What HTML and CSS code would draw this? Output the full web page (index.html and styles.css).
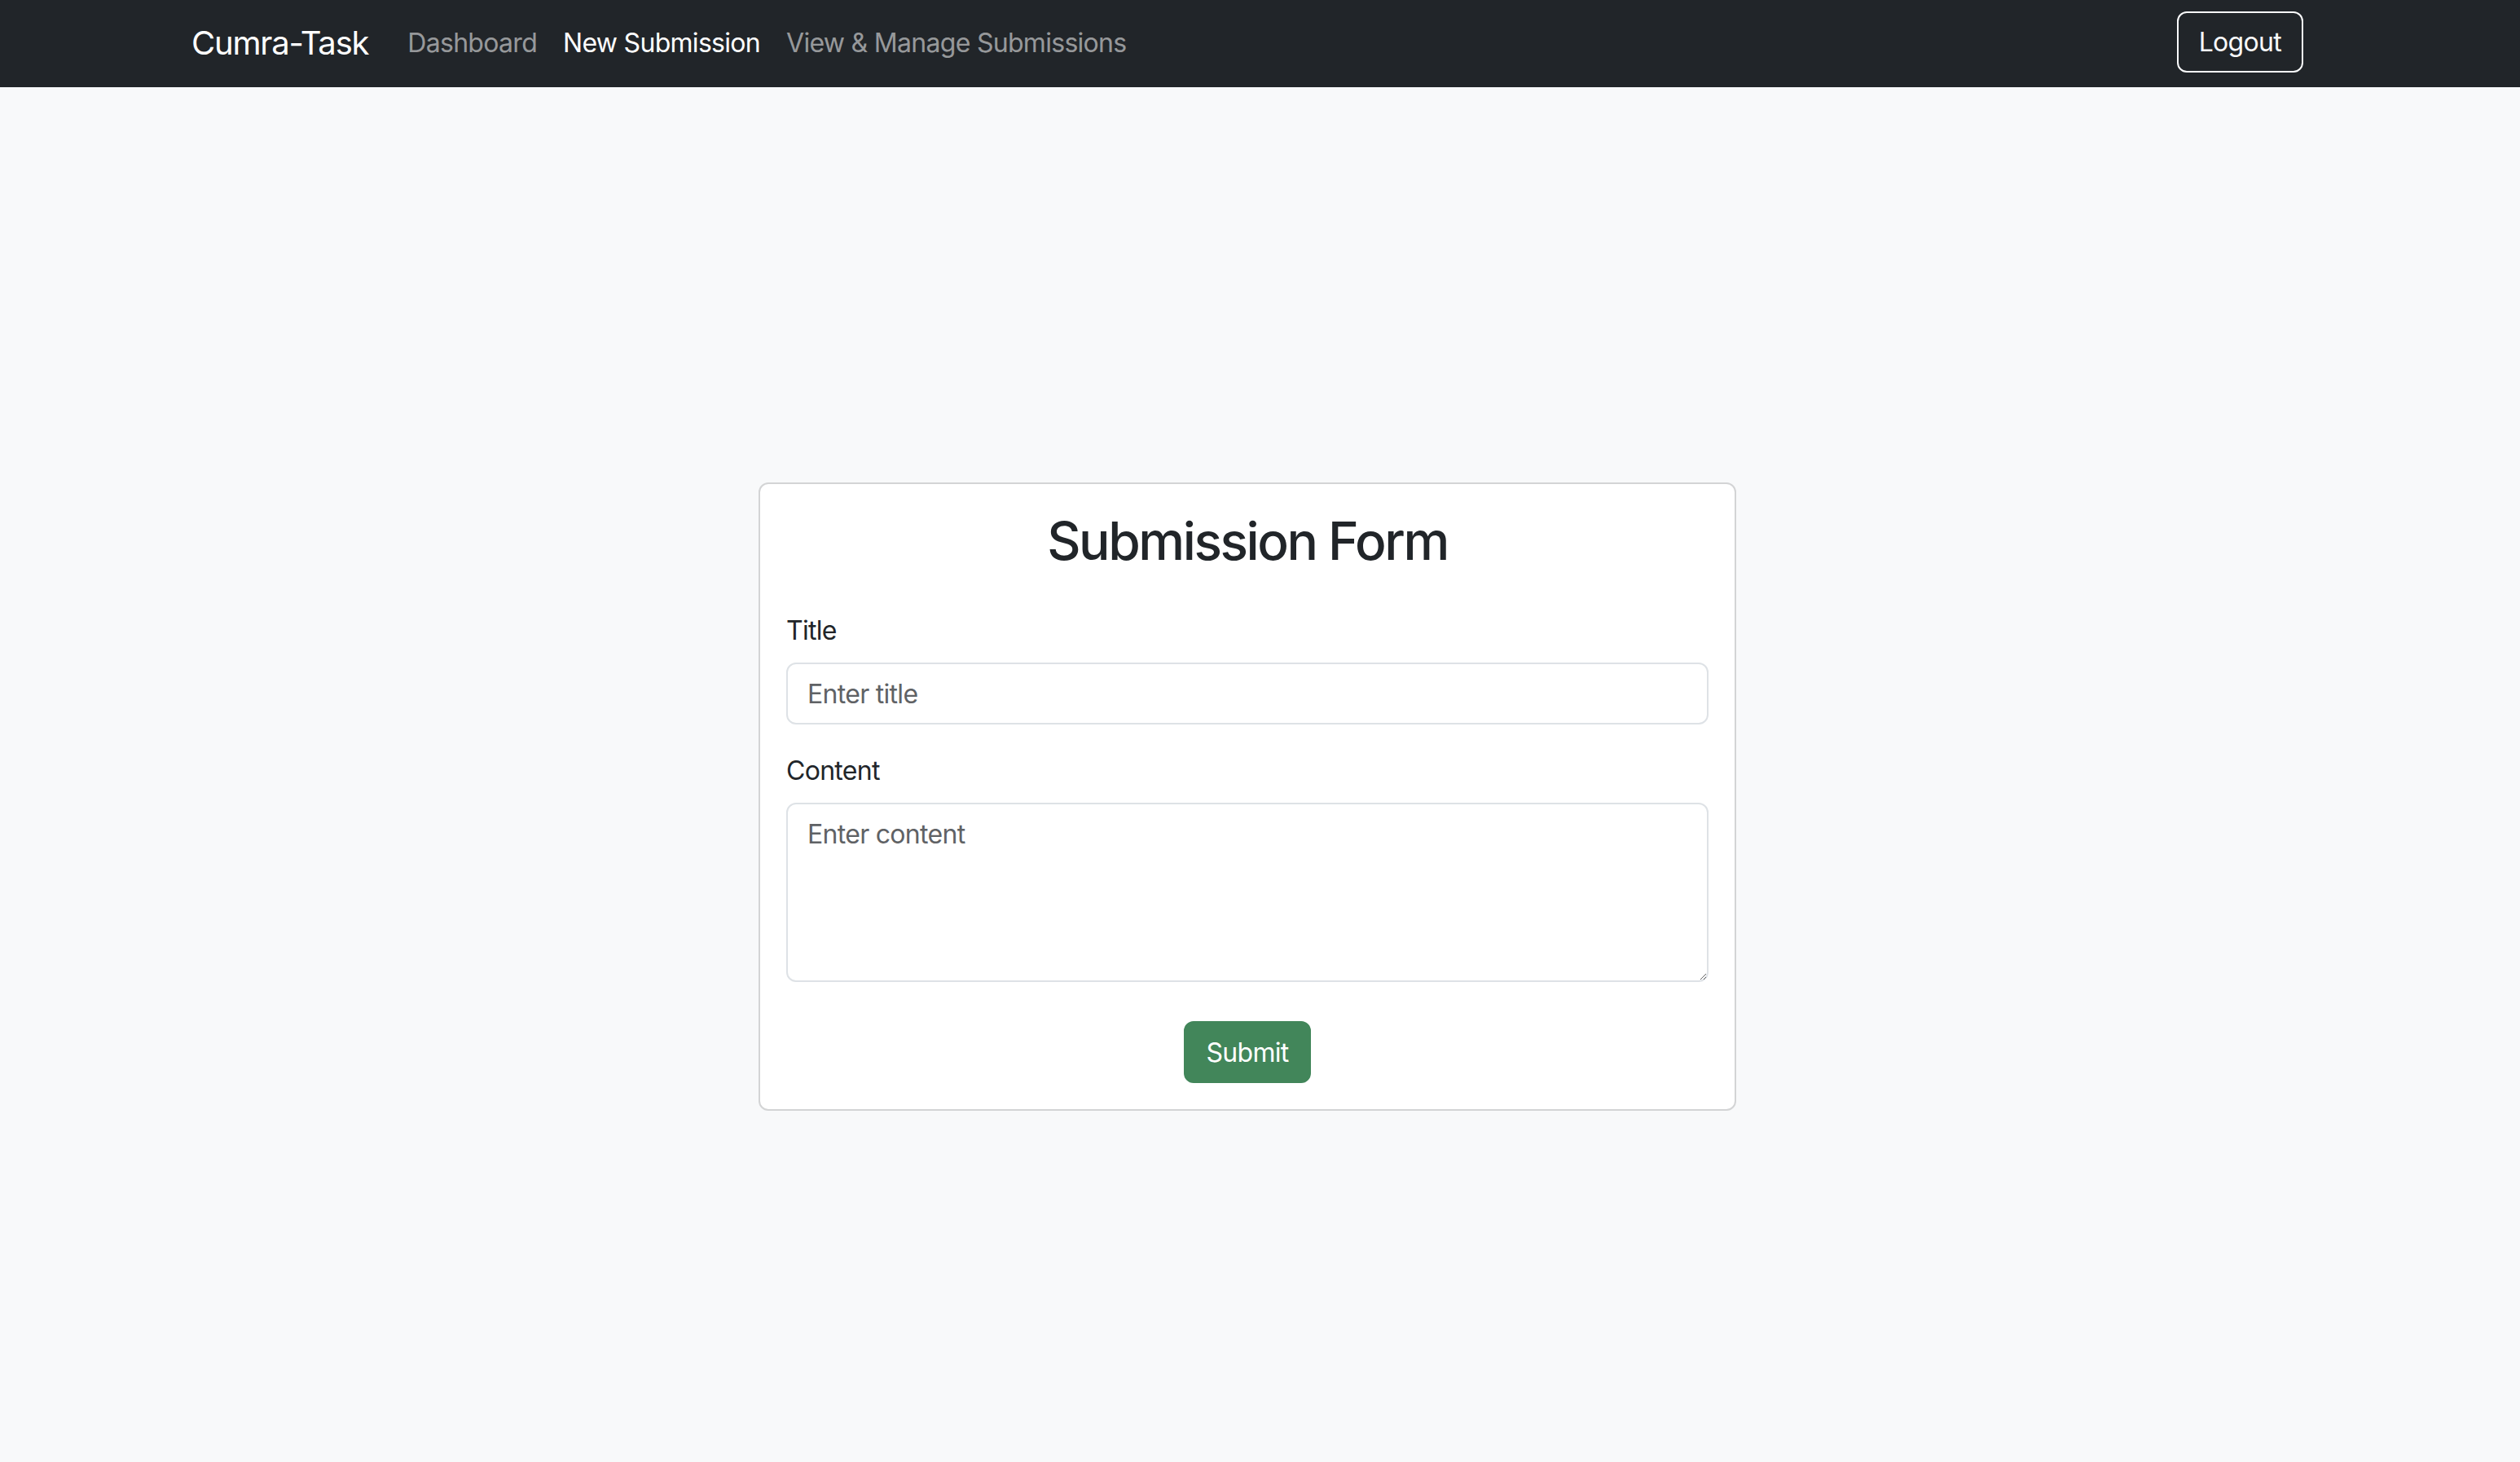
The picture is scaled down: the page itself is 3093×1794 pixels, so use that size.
FILE: index.html
```html
<!DOCTYPE html>
<html lang="en">
<head>
<meta charset="utf-8">
<title>Cumra-Task - New Submission</title>
<link rel="stylesheet" href="styles.css">
</head>
<body>
<nav class="navbar">
  <div class="nav-container">
    <a class="brand" href="#">Cumra-Task</a>
    <ul class="nav-links">
      <li><a class="nav-link" href="#">Dashboard</a></li>
      <li><a class="nav-link active" href="#">New Submission</a></li>
      <li><a class="nav-link" href="#">View &amp; Manage Submissions</a></li>
    </ul>
    <button class="btn-logout" type="button">Logout</button>
  </div>
</nav>
<main class="main">
  <div class="card">
    <form class="card-body">
      <h2 class="card-title">Submission Form</h2>
      <div class="form-group">
        <label class="form-label" for="title">Title</label>
        <input class="form-control" id="title" type="text" placeholder="Enter title">
      </div>
      <div class="form-group form-group-last">
        <label class="form-label" for="content">Content</label>
        <textarea class="form-control form-textarea" id="content" placeholder="Enter content"></textarea>
      </div>
      <div class="actions">
        <button class="btn-submit" type="submit">Submit</button>
      </div>
    </form>
  </div>
</main>
</body>
</html>
```

FILE: styles.css
```css
* {
  box-sizing: border-box;
}

html, body {
  margin: 0;
  padding: 0;
}

body {
  background: #f8f9fa;
  color: #212529;
  font-family: Inter, "Noto Sans", "Liberation Sans", sans-serif;
  font-size: 32px;
  line-height: 1.5;
  letter-spacing: -0.022em;
  padding-right: 31px;
  min-height: 1794px;
}

.navbar {
  background: #212529;
  height: 107px;
  margin-right: -31px;
  padding-right: 31px;
  padding-bottom: 2px;
  display: flex;
  align-items: center;
}

.nav-container {
  width: 2592px;
  margin: 0 auto;
  display: flex;
  align-items: center;
}

.brand {
  color: #ffffff;
  text-decoration: none;
  font-size: 40px;
  line-height: 60px;
  letter-spacing: -0.03em;
  margin-right: 32px;
}

.nav-links {
  list-style: none;
  margin: 0;
  padding: 0;
  display: flex;
  flex: 1;
}

.nav-link {
  display: block;
  padding: 0 16px;
  color: rgba(255, 255, 255, 0.55);
  text-decoration: none;
  font-size: 32px;
  line-height: 48px;
}

.nav-link.active {
  color: #ffffff;
}

.btn-logout {
  font-family: inherit;
  font-size: 32px;
  line-height: 48px;
  letter-spacing: inherit;
  color: #f8f9fa;
  background: transparent;
  border: 2px solid #f8f9fa;
  border-radius: 12px;
  padding: 12px 25px 11px;
  margin-top: -3px;
}

.main {
  padding-top: 485px;
}

.card {
  width: 1200px;
  margin: 0 auto;
  background: #ffffff;
  border: 2px solid #d3d4d5;
  border-radius: 12px;
}

.card-body {
  padding: 32px;
  margin: 0;
}

.card-title {
  margin: 0 0 46px;
  text-align: center;
  font-size: 64px;
  font-weight: 500;
  line-height: 1.2;
  letter-spacing: -0.038em;
  color: #212529;
}

.form-group {
  margin-bottom: 32px;
}

.form-group-last {
  margin-bottom: 48px;
}

.form-label {
  display: block;
  margin-bottom: 16px;
  font-size: 32px;
  line-height: 48px;
  padding-top: 1px;
  height: 48px;
}

.form-control {
  display: block;
  width: 100%;
  height: 76px;
  padding: 13px 24px 11px;
  font-family: inherit;
  font-size: 32px;
  line-height: 48px;
  letter-spacing: inherit;
  color: #212529;
  background: #ffffff;
  border: 2px solid #dee2e6;
  border-radius: 12px;
  outline: none;
}

.form-control::placeholder {
  color: #5f6265;
  opacity: 1;
}

.form-textarea {
  height: 220px;
  resize: vertical;
}

.actions {
  display: flex;
  justify-content: center;
}

.btn-submit {
  font-family: inherit;
  font-size: 32px;
  line-height: 48px;
  letter-spacing: inherit;
  color: #ffffff;
  background: #42865a;
  border: 2px solid #42865a;
  border-radius: 12px;
  padding: 13px 25px 11px;
}
```
